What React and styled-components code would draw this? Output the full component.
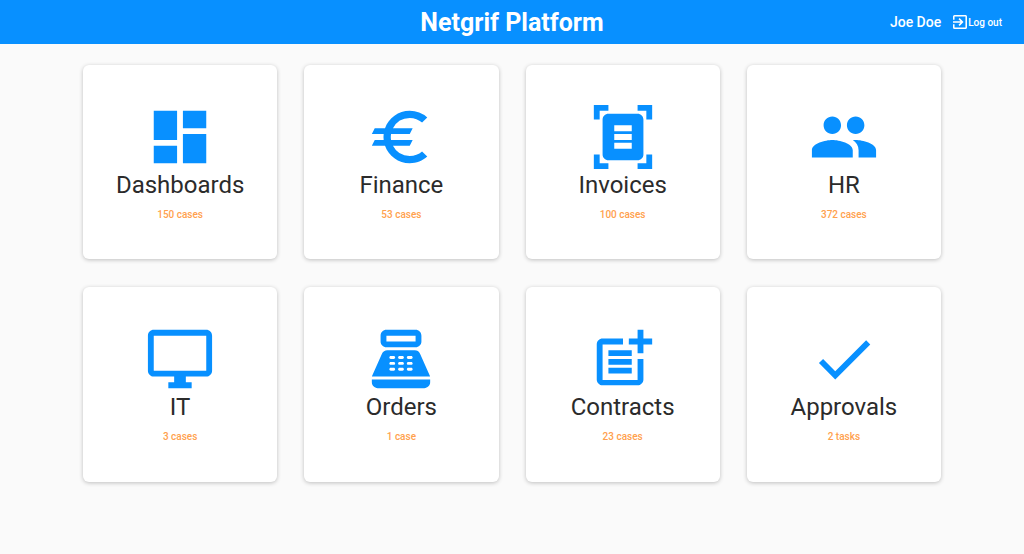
import React from 'react'
import styled, { createGlobalStyle } from 'styled-components'
import {
  MdCheck,
  MdDashboard,
  MdDocumentScanner,
  MdEuro,
  MdExitToApp,
  MdOutlineDesktopWindows,
  MdPeople,
  MdPointOfSale,
  MdPostAdd,
} from 'react-icons/md'

const GlobalStyle = createGlobalStyle`
  * {
    box-sizing: border-box;
  }

  body {
    margin: 0;
    background-color: #fafafa;
    font-family: Roboto, 'Liberation Sans', sans-serif;
  }
`

const Header = styled.header`
  display: grid;
  grid-template-columns: 1fr auto 1fr;
  align-items: center;
  height: 44px;
  padding: 0 22px;
  background-color: #0890ff;
  color: #fff;
`

const Title = styled.h1`
  grid-column: 2;
  margin: 0;
  font-size: 25px;
  font-weight: 700;
  line-height: 1;
`

const UserArea = styled.div`
  display: flex;
  align-items: center;
  justify-content: flex-end;
  gap: 12px;
`

const UserName = styled.span`
  font-size: 14px;
  font-weight: 500;
`

const LogoutButton = styled.button`
  display: flex;
  align-items: center;
  gap: 1px;
  padding: 0;
  border: none;
  background: none;
  color: inherit;
  font-family: inherit;
  font-size: 10px;
  font-weight: 500;
  cursor: pointer;

  svg {
    width: 14px;
    height: 14px;
  }
`

const Grid = styled.main`
  display: grid;
  grid-template-columns: repeat(4, 1fr);
  gap: 28px 27px;
  padding: 21px 83px;
`

const Card = styled.a`
  display: flex;
  flex-direction: column;
  align-items: center;
  justify-content: center;
  aspect-ratio: 1;
  border-radius: 6px;
  background-color: #fff;
  box-shadow: 0 1px 4px rgba(0, 0, 0, 0.24);
  text-decoration: none;

  svg {
    width: 70px;
    height: 70px;
    color: #0890ff;
  }
`

const CardTitle = styled.h2`
  margin: 0;
  color: #2b2b2b;
  font-size: 24px;
  font-weight: 400;
  line-height: 27px;
`

const CardCount = styled.span`
  margin-top: 9px;
  color: #ffa14e;
  font-size: 10px;
  font-weight: 500;
  line-height: 14px;
`

const items = [
  { title: 'Dashboards', count: '150 cases', icon: MdDashboard },
  { title: 'Finance', count: '53 cases', icon: MdEuro },
  { title: 'Invoices', count: '100 cases', icon: MdDocumentScanner },
  { title: 'HR', count: '372 cases', icon: MdPeople },
  { title: 'IT', count: '3 cases', icon: MdOutlineDesktopWindows },
  { title: 'Orders', count: '1 case', icon: MdPointOfSale },
  { title: 'Contracts', count: '23 cases', icon: MdPostAdd },
  { title: 'Approvals', count: '2 tasks', icon: MdCheck },
]

const App = () => {
  return (
    <>
      <GlobalStyle />
      <Header>
        <Title>Netgrif Platform</Title>
        <UserArea>
          <UserName>Joe Doe</UserName>
          <LogoutButton type='button'>
            {/* trims the empty margin around the glyph */}
            <MdExitToApp viewBox='3 3 18 18' />
            Log out
          </LogoutButton>
        </UserArea>
      </Header>
      <Grid>
        {items.map(({ title, count, icon: Icon }) => (
          <Card key={title} href={`#${title.toLowerCase()}`}>
            <Icon />
            <CardTitle>{title}</CardTitle>
            <CardCount>{count}</CardCount>
          </Card>
        ))}
      </Grid>
    </>
  )
}

export default App
